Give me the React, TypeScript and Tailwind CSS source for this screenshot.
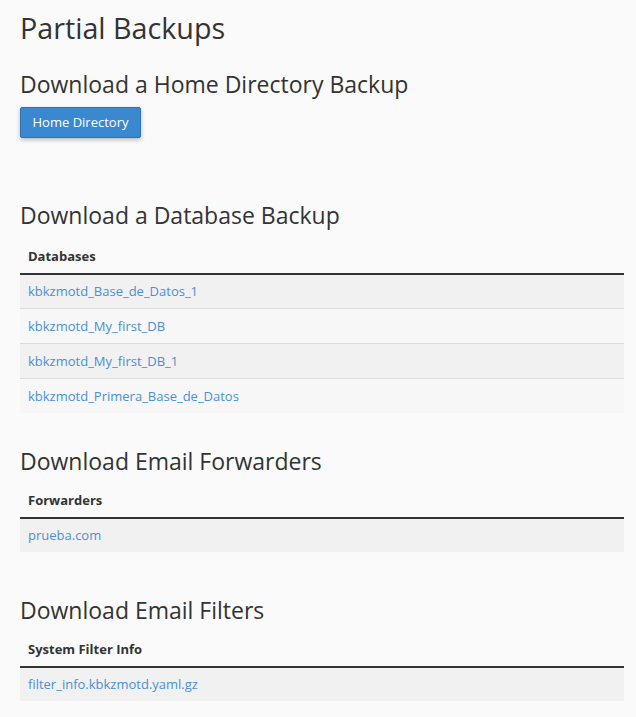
const databases = [
  'kbkzmotd_Base_de_Datos_1',
  'kbkzmotd_My_first_DB',
  'kbkzmotd_My_first_DB_1',
  'kbkzmotd_Primera_Base_de_Datos',
]

function BackupTable({ title, items }: { title: string; items: string[] }) {
  return (
    <table className="w-full border-collapse text-[13px]">
      <thead>
        <tr className="border-b-2 border-[#333333]">
          <th className="px-[8px] py-[8px] text-left font-bold leading-[18px] text-[#333333]">{title}</th>
        </tr>
      </thead>
      <tbody>
        {items.map((item, i) => (
          <tr key={item} className={i % 2 === 0 ? 'bg-[#f1f1f1]' : 'bg-[#f7f7f7]'}>
            <td
              className={
                i === 0
                  ? 'px-[8px] py-[8px] leading-[17px]'
                  : 'border-t border-[#dddddd] px-[8px] py-[8px] leading-[18px]'
              }
            >
              <a href="#" className="text-[#4a8fd4]">{item}</a>
            </td>
          </tr>
        ))}
      </tbody>
    </table>
  )
}

export default function App() {
  return (
    <div className="min-h-[717px] bg-[#fafafa] pl-[20px] pr-[12px] pb-[20px] text-[#333333] font-['Open_Sans',sans-serif]">
      <h1 className="pt-[12px] text-[28.7px] font-normal leading-[32px]">Partial Backups</h1>

      <h2 className="mt-[26px] text-[23px] font-normal leading-[28px]">Download a Home Directory Backup</h2>
      <button className="mt-[9px] h-[31px] w-[121px] rounded-[2px] border border-[#2f72b3] bg-[#3a88d0] text-[13px] text-white shadow-[0_2px_4px_rgba(0,0,0,0.25)]">
        Home Directory
      </button>

      <h2 className="mt-[63px] text-[23px] font-normal leading-[28px]">Download a Database Backup</h2>
      <div className="mt-[10px]">
        <BackupTable title="Databases" items={databases} />
      </div>

      <h2 className="mt-[34px] text-[23px] font-normal leading-[28px]">Download Email Forwarders</h2>
      <div className="mt-[8px]">
        <BackupTable title="Forwarders" items={['prueba.com']} />
      </div>

      <h2 className="mt-[44px] text-[23px] font-normal leading-[28px]">Download Email Filters</h2>
      <div className="mt-[8px]">
        <BackupTable title="System Filter Info" items={['filter_info.kbkzmotd.yaml.gz']} />
      </div>
    </div>
  )
}
